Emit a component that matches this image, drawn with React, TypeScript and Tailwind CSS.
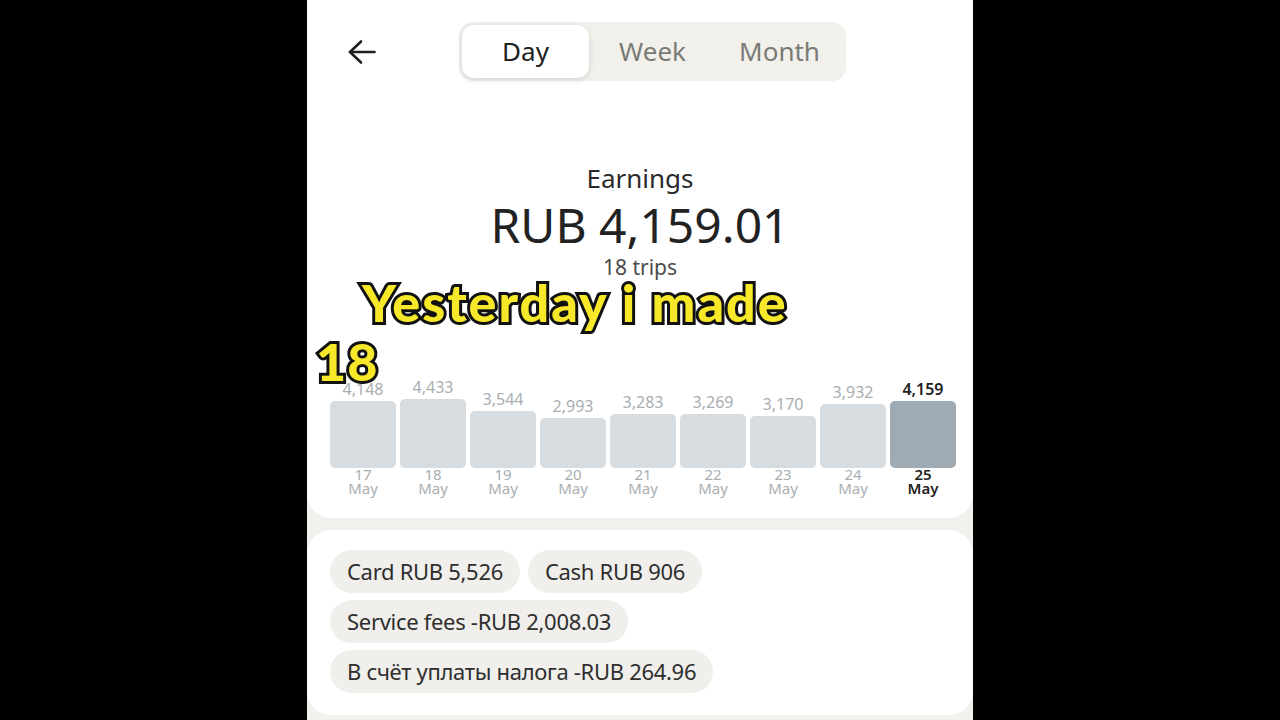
import React from "react"

const days = [
  { value: "4,148", day: "17", h: 67 },
  { value: "4,433", day: "18", h: 71 },
  { value: "3,544", day: "19", h: 57 },
  { value: "2,993", day: "20", h: 50 },
  { value: "3,283", day: "21", h: 54 },
  { value: "3,269", day: "22", h: 54 },
  { value: "3,170", day: "23", h: 52 },
  { value: "3,932", day: "24", h: 64 },
  { value: "4,159", day: "25", h: 67, active: true },
]

const chips = [
  ["Card RUB 5,526", "Cash RUB 906"],
  ["Service fees -RUB 2,008.03"],
  ["В счёт уплаты налога -RUB 264.96"],
]

function BackArrow() {
  return (
    <svg width="30" height="28" viewBox="0 0 30 28" fill="none" stroke="#1f1f1f" strokeWidth="2.6" strokeLinecap="round" strokeLinejoin="round">
      <path d="M27.5 14H3" />
      <path d="M14 3.5 3 14l11 10.5" />
    </svg>
  )
}

export default function App() {
  return (
    <div className="w-full h-[720px] bg-black flex justify-center overflow-hidden font-['Noto_Sans',sans-serif]">
      <div className="relative w-[666px] h-[720px] bg-[#f2f1ed] flex flex-col">
        {/* top section */}
        <div className="bg-white rounded-b-[24px] h-[518px] flex flex-col">
          <div className="flex items-center pl-[40px] pt-[22px]">
            <BackArrow />
            <div className="ml-[82px] flex p-[3px] rounded-[14px] bg-[#f1f0eb]">
              <div className="w-[127px] h-[53px] rounded-[12px] bg-white shadow-[0_2px_6px_rgba(0,0,0,0.12)] flex items-center justify-center text-[26px] text-[#222]">
                Day
              </div>
              <div className="w-[127px] h-[53px] flex items-center justify-center text-[26px] text-[#7b7b75]">Week</div>
              <div className="w-[127px] h-[53px] flex items-center justify-center text-[26px] text-[#7b7b75]">Month</div>
            </div>
          </div>

          <div className="flex flex-col items-center mt-[81px]">
            <div className="text-[26px] leading-[32px] text-[#2b2b2b]">Earnings</div>
            <div className="mt-[5px] text-[48px] leading-[52px] text-[#222]">RUB 4,159.01</div>
            <div className="mt-[3px] text-[21px] leading-[26px] text-[#4a4a4a]">18 trips</div>
          </div>

          <div className="mt-auto mb-[23px] pl-[23px] flex gap-[4px]">
            {days.map((d) => (
              <div key={d.day} className="w-[66px] flex flex-col items-center">
                <div className="h-[90px] w-full flex flex-col justify-end items-center">
                  <div
                    className={
                      d.active
                        ? "text-[16px] leading-[18px] font-semibold text-[#222] mb-[3px]"
                        : "text-[16px] leading-[18px] text-[#a9aeb1] mb-[3px]"
                    }
                  >
                    {d.value}
                  </div>
                  <div
                    className={d.active ? "w-full rounded-[5px] bg-[#9eabb5]" : "w-full rounded-[5px] bg-[#d6dce0]"}
                    style={{ height: d.h }}
                  />
                </div>
                <div
                  className={
                    d.active
                      ? "flex flex-col items-center text-[15px] leading-[14px] font-semibold text-[#222] -mt-[1px]"
                      : "flex flex-col items-center text-[15px] leading-[14px] text-[#a9aeb1] -mt-[1px]"
                  }
                >
                  <span>{d.day}</span>
                  <span>May</span>
                </div>
              </div>
            ))}
          </div>
        </div>

        {/* breakdown card */}
        <div className="mt-[12px] bg-white rounded-[24px] h-[185px] pl-[23px] pt-[20px] flex flex-col gap-[7px]">
          {chips.map((row, i) => (
            <div key={i} className="flex gap-[8px]">
              {row.map((c) => (
                <div key={c} className="h-[43px] px-[17px] rounded-full bg-[#f0efeb] flex items-center text-[22px] text-[#2e2e2e] tracking-[-0.3px]">
                  {c}
                </div>
              ))}
            </div>
          ))}
        </div>

        {/* video captions */}
        <div className="absolute left-[55px] top-[272px] text-[52px] leading-[60px] font-['Lato',sans-serif] font-black text-[#f7e829] tracking-[2px] [-webkit-text-stroke:6px_#111] [paint-order:stroke_fill]">
          Yesterday i made
        </div>
        <div className="absolute left-[9px] top-[331px] text-[52px] leading-[60px] font-['Lato',sans-serif] font-black text-[#f7e829] tracking-[1px] [-webkit-text-stroke:6px_#111] [paint-order:stroke_fill]">
          18
        </div>
      </div>
    </div>
  )
}
